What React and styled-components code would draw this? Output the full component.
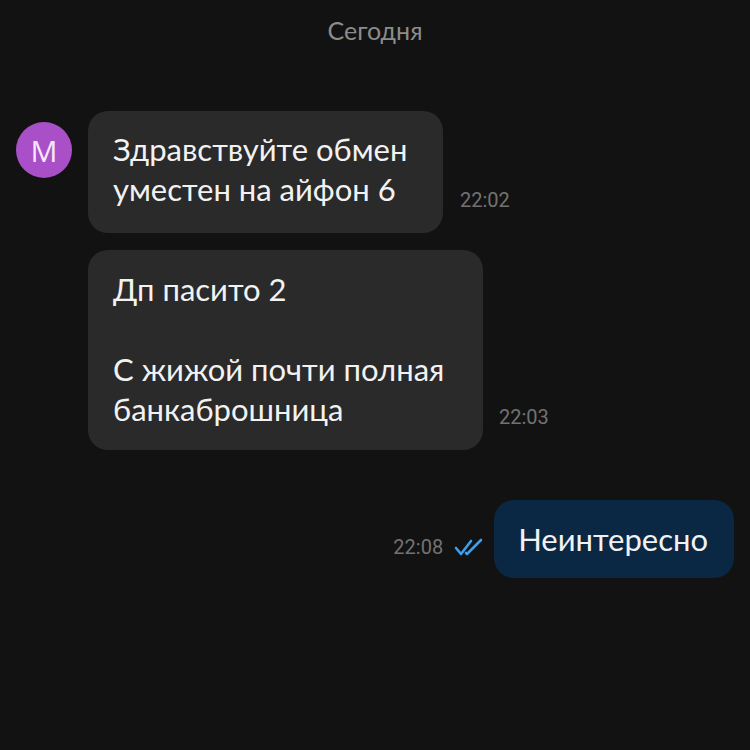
import React from "react";
import styled, { createGlobalStyle } from "styled-components";

const Global = createGlobalStyle`
  html, body { margin: 0; padding: 0; background: #121212; }
  body { font-family: Lato, "Noto Sans", sans-serif; -webkit-font-smoothing: antialiased; }
  #root { min-height: 750px; }
`;

const Screen = styled.div`
  width: 750px;
  height: 750px;
  background: #121212;
  display: flex;
  flex-direction: column;
  overflow: hidden;
`;

const DateLabel = styled.div`
  text-align: center;
  color: #8c8c8c;
  font-size: 25px;
  line-height: 30px;
  padding-top: 15px;
  margin-bottom: 66px;
`;

const IncomingGroup = styled.div`
  display: flex;
  gap: 16px;
  padding-left: 16px;
`;

const Avatar = styled.div`
  width: 56px;
  height: 56px;
  border-radius: 50%;
  background: #a94fc7;
  color: #f6e8fa;
  display: flex;
  align-items: center;
  justify-content: center;
  font-size: 30px;
  font-family: "Open Sans", Lato, sans-serif;
  margin-top: 11px;
  flex-shrink: 0;
`;

const Stack = styled.div`
  display: flex;
  flex-direction: column;
  gap: 17px;
`;

const Row = styled.div`
  display: flex;
  align-items: flex-end;
  gap: ${(p) => p.$gap || 17}px;
`;

const Bubble = styled.div`
  background: ${(p) => (p.$out ? "#0a2744" : "#2a2a2a")};
  color: #f2f2f2;
  border-radius: 20px;
  font-size: 31px;
  line-height: 40px;
  padding: ${(p) => p.$pad};
  width: ${(p) => (p.$w ? `${p.$w}px` : "auto")};
  box-sizing: border-box;
  white-space: pre-line;
`;

const Time = styled.span`
  font-family: Roboto, "Liberation Sans", sans-serif;
  font-size: 20px;
  color: #727272;
  line-height: 20px;
  margin-bottom: ${(p) => p.$mb ?? 23}px;
`;

const Meta = styled.div`
  display: flex;
  align-items: center;
  gap: 11px;
  margin-bottom: 21px;
`;

const OutgoingRow = styled.div`
  display: flex;
  justify-content: flex-end;
  align-items: flex-end;
  gap: 10px;
  padding-right: 16px;
  margin-top: 50px;
`;

const Checks = () => (
  <svg width="30" height="20" viewBox="0 0 30 20" fill="none" stroke="#3a9ff0" strokeWidth="2.6" strokeLinecap="round" strokeLinejoin="round">
    <path d="M2 11 L7 17 L17 4" />
    <path d="M12 16 L13 17 L27 3" />
  </svg>
);

export default function App() {
  return (
    <Screen>
      <Global />
      <DateLabel>Сегодня</DateLabel>
      <IncomingGroup>
        <Avatar>М</Avatar>
        <Stack>
          <Row>
            <Bubble $w={355} $pad="18px 20px 24px 25px">{"Здравствуйте обмен\nуместен на айфон 6"}</Bubble>
            <Time>22:02</Time>
          </Row>
          <Row $gap={16}>
            <Bubble $w={395} $pad="19px 20px 21px 25px">{"Дп пасито 2\n\nС жижой почти полная\nбанкаброшница"}</Bubble>
            <Time>22:03</Time>
          </Row>
        </Stack>
      </IncomingGroup>
      <OutgoingRow>
        <Meta>
          <Time $mb={0}>22:08</Time>
          <Checks />
        </Meta>
        <Bubble $out $pad="19px 26px 19px 24px">Неинтересно</Bubble>
      </OutgoingRow>
    </Screen>
  );
}
